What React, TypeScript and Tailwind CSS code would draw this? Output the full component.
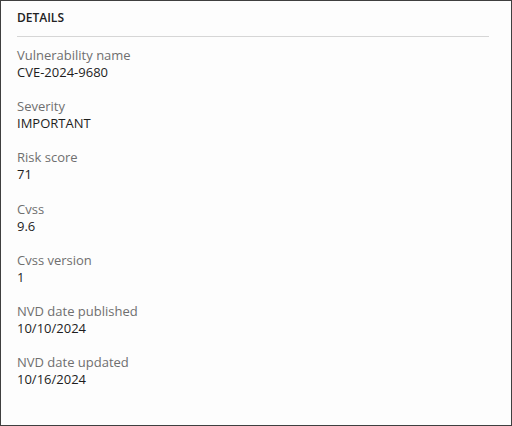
import React from "react";

const items: [string, string][] = [
  ["Vulnerability name", "CVE-2024-9680"],
  ["Severity", "IMPORTANT"],
  ["Risk score", "71"],
  ["Cvss", "9.6"],
  ["Cvss version", "1"],
  ["NVD date published", "10/10/2024"],
  ["NVD date updated", "10/16/2024"],
];

export default function App() {
  return (
    <div
      className="w-[512px] h-[426px] border border-[#3f3f3f] bg-[#fdfdfd] pl-[16px] pr-[22px] text-[13px] leading-[17px]"
      style={{ fontFamily: '"Open Sans", "Noto Sans", sans-serif' }}
    >
      <div className="pt-[8px] pb-[10px] border-b border-[#d6d6d6] font-semibold text-[12px] text-[#222222]">
        DETAILS
      </div>
      <div className="flex flex-col gap-[17.2px] pt-[10px]">
        {items.map(([label, value]) => (
          <div key={label} className="flex flex-col">
            <div className="text-[#6f6f6f]">{label}</div>
            <div className="text-[#1e1e1e]">{value}</div>
          </div>
        ))}
      </div>
    </div>
  );
}
